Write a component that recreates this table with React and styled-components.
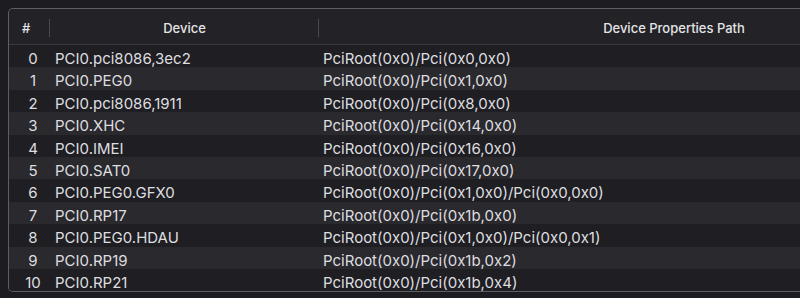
import React from "react";
import styled, { createGlobalStyle } from "styled-components";

const GlobalStyle = createGlobalStyle`
  html, body {
    margin: 0;
    padding: 0;
    background: #1d1c20;
    overflow: hidden;
  }
  body {
    font-family: Inter, "Noto Sans", sans-serif;
    -webkit-font-smoothing: antialiased;
  }
`;

const Page = styled.div`
  width: 800px;
  height: 298px;
  padding: 8px 0 0 8px;
  box-sizing: border-box;
  overflow: hidden;
`;

const Frame = styled.div`
  width: 1100px;
  border: 1px solid #5f5e62;
  border-right: none;
  border-radius: 5px 0 0 5px;
  background: #1f1e22;
  overflow: hidden;
  box-shadow: inset 1px 1px 0 #2c2b2f;
`;

const Header = styled.div`
  display: grid;
  grid-template-columns: 41px 269px 710px;
  height: 35px;
  align-items: center;
  background: #232226;
  border-bottom: 1px solid #3a393d;
`;

const HeadCell = styled.div`
  position: relative;
  height: 100%;
  display: flex;
  align-items: center;
  justify-content: ${(p) => (p.left ? "flex-start" : "center")};
  padding-left: ${(p) => (p.left ? "13px" : "0")};
  padding-top: 2px;
  color: #e4e4e6;
  font-size: 13px;
  font-weight: 500;
  box-sizing: border-box;

  &::after {
    content: ${(p) => (p.divider ? '""' : "none")};
    position: absolute;
    right: 0;
    top: 10px;
    bottom: 7px;
    width: 1px;
    background: #48474b;
  }
`;

const Row = styled.div`
  display: grid;
  grid-template-columns: 41px 269px 710px;
  height: 22.4px;
  box-sizing: border-box;
  padding-top: 4px;
  align-items: center;
  background: ${(p) => (p.odd ? "#2a292d" : "#1f1e22")};
  color: #dedee0;
  font-size: 15px;
`;

const Num = styled.div`
  text-align: center;
  padding-left: 7px;
`;

const Cell = styled.div`
  padding-left: ${(p) => p.pad}px;
  white-space: nowrap;
`;

const rows = [
  ["PCI0.pci8086,3ec2", "PciRoot(0x0)/Pci(0x0,0x0)"],
  ["PCI0.PEG0", "PciRoot(0x0)/Pci(0x1,0x0)"],
  ["PCI0.pci8086,1911", "PciRoot(0x0)/Pci(0x8,0x0)"],
  ["PCI0.XHC", "PciRoot(0x0)/Pci(0x14,0x0)"],
  ["PCI0.IMEI", "PciRoot(0x0)/Pci(0x16,0x0)"],
  ["PCI0.SAT0", "PciRoot(0x0)/Pci(0x17,0x0)"],
  ["PCI0.PEG0.GFX0", "PciRoot(0x0)/Pci(0x1,0x0)/Pci(0x0,0x0)"],
  ["PCI0.RP17", "PciRoot(0x0)/Pci(0x1b,0x0)"],
  ["PCI0.PEG0.HDAU", "PciRoot(0x0)/Pci(0x1,0x0)/Pci(0x0,0x1)"],
  ["PCI0.RP19", "PciRoot(0x0)/Pci(0x1b,0x2)"],
  ["PCI0.RP21", "PciRoot(0x0)/Pci(0x1b,0x4)"],
];

const App = () => {
  return (
    <>
      <GlobalStyle />
      <Page>
        <Frame>
          <Header>
            <HeadCell left divider>
              #
            </HeadCell>
            <HeadCell divider>Device</HeadCell>
            <HeadCell>Device Properties Path</HeadCell>
          </Header>
          {rows.map(([device, path], i) => (
            <Row key={i} odd={i % 2 === 1}>
              <Num>{i}</Num>
              <Cell pad={5}>{device}</Cell>
              <Cell pad={4}>{path}</Cell>
            </Row>
          ))}
        </Frame>
      </Page>
    </>
  );
};

export default App;
